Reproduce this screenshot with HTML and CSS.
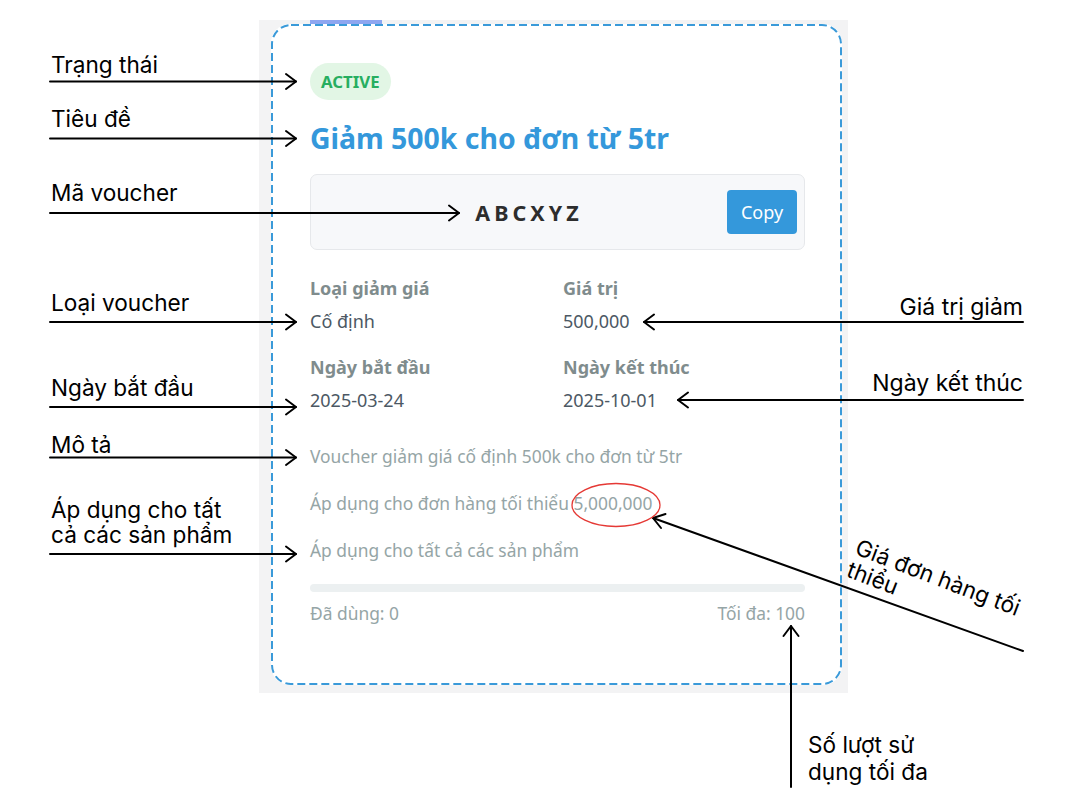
FILE: index.html
```html
<!DOCTYPE html>
<html lang="vi">
<head>
<meta charset="utf-8">
<title>Voucher card – chú thích</title>
<link rel="stylesheet" href="styles.css">
</head>
<body>
<div class="stage">
  <div class="panel">
    <span class="tab-indicator"></span>
    <div class="card">
      <svg class="card-border" width="571" height="661" viewBox="0 0 571 661" aria-hidden="true">
        <rect x="1" y="1" width="569" height="659" rx="19" ry="19"></rect>
      </svg>
      <span class="badge">ACTIVE</span>
      <h2 class="title">Giảm 500k cho đơn từ 5tr</h2>
      <div class="code-box">
        <span class="code">ABCXYZ</span>
        <button class="copy-btn">Copy</button>
      </div>
      <div class="info-grid">
        <div class="field">
          <div class="field-label">Loại giảm giá</div>
          <div class="field-value">Cố định</div>
        </div>
        <div class="field">
          <div class="field-label">Giá trị</div>
          <div class="field-value">500,000</div>
        </div>
        <div class="field">
          <div class="field-label">Ngày bắt đầu</div>
          <div class="field-value">2025-03-24</div>
        </div>
        <div class="field">
          <div class="field-label">Ngày kết thúc</div>
          <div class="field-value">2025-10-01</div>
        </div>
      </div>
      <p class="note">Voucher giảm giá cố định 500k cho đơn từ 5tr</p>
      <p class="note">Áp dụng cho đơn hàng tối thiểu 5,000,000</p>
      <p class="note">Áp dụng cho tất cả các sản phẩm</p>
      <div class="progress"><div class="progress-fill" style="width:0%"></div></div>
      <div class="usage">
        <span>Đã dùng: 0</span>
        <span>Tối đa: 100</span>
      </div>
    </div>
  </div>

  <svg class="arrows" width="1069" height="806" viewBox="0 0 1069 806" aria-hidden="true">
    <g class="arrow-lines">
      <line x1="50" y1="81.5" x2="296" y2="81.5"/>
      <polyline points="286,74 296,81.5 286,89"/>
      <line x1="50" y1="138.5" x2="296" y2="138.5"/>
      <polyline points="286,131 296,138.5 286,146"/>
      <line x1="50" y1="213" x2="459" y2="213"/>
      <polyline points="449,205.5 459,213 449,220.5"/>
      <line x1="50" y1="322" x2="296" y2="322"/>
      <polyline points="286,314.5 296,322 286,329.5"/>
      <line x1="50" y1="407" x2="296" y2="407"/>
      <polyline points="286,399.5 296,407 286,414.5"/>
      <line x1="50" y1="457.5" x2="296" y2="457.5"/>
      <polyline points="286,450 296,457.5 286,465"/>
      <line x1="50" y1="554" x2="296" y2="554"/>
      <polyline points="286,546.5 296,554 286,561.5"/>
      <line x1="1023" y1="322" x2="644" y2="322"/>
      <polyline points="654,314.5 644,322 654,329.5"/>
      <line x1="1023" y1="400" x2="678" y2="400"/>
      <polyline points="688,392.5 678,400 688,407.5"/>
      <line x1="1023" y1="651" x2="653" y2="518"/>
      <polyline points="665.5,514 653,518 661,528"/>
      <line x1="791" y1="787" x2="791" y2="626"/>
      <polyline points="783.5,636 791,626 798.5,636"/>
    </g>
    <ellipse class="highlight" cx="616" cy="505" rx="44" ry="21.5"/>
  </svg>

  <div class="label label-left" style="top:51px">Trạng thái</div>
  <div class="label label-left" style="top:105px">Tiêu đề</div>
  <div class="label label-left" style="top:179px">Mã voucher</div>
  <div class="label label-left" style="top:289px">Loại voucher</div>
  <div class="label label-left" style="top:374px">Ngày bắt đầu</div>
  <div class="label label-left" style="top:431px">Mô tả</div>
  <div class="label label-left label-multi" style="top:497px">Áp dụng cho tất<br>cả các sản phẩm</div>
  <div class="label label-right" style="top:294px">Giá trị giảm</div>
  <div class="label label-right" style="top:370px">Ngày kết thúc</div>
  <div class="label label-rotated">Giá đơn hàng tối<br>thiểu</div>
  <div class="label label-bottom">Số lượt sử<br>dụng tối đa</div>
</div>
</body>
</html>
```

FILE: styles.css
```css
* { box-sizing: border-box; }

html, body {
  margin: 0;
  padding: 0;
  background: #ffffff;
}

.stage {
  position: relative;
  width: 1069px;
  height: 806px;
  overflow: hidden;
  padding-top: 20px;
  padding-left: 259px;
}

/* gray panel around the card */
.panel {
  position: relative;
  width: 589px;
  height: 673px;
  background: #f3f3f4;
  padding: 4px 6px 8px 12px;
}

.tab-indicator {
  position: absolute;
  left: 51px;
  top: 0;
  width: 72px;
  height: 4px;
  background: #8ea6f0;
}

.card {
  position: relative;
  width: 571px;
  height: 661px;
  background: #ffffff;
  border-radius: 19px;
  padding: 39px 37px 0 39px;
  font-family: "Noto Sans", "Open Sans", sans-serif;
  display: flex;
  flex-direction: column;
  align-items: stretch;
}

.card-border {
  position: absolute;
  left: 0;
  top: 0;
  pointer-events: none;
}
.card-border rect {
  fill: none;
  stroke: #3a9ad9;
  stroke-width: 2;
  stroke-dasharray: 8 4;
}

.badge {
  align-self: flex-start;
  height: 37px;
  line-height: 37px;
  padding: 0 11px;
  border-radius: 19px;
  background: #e2f6e5;
  color: #27ae60;
  font-weight: 700;
  font-size: 16.8px;
}

.title {
  margin: 19px 0 0;
  font-size: 28.4px;
  line-height: 38px;
  font-weight: 700;
  color: #3498db;
  letter-spacing: 0;
}

.code-box {
  margin-top: 17px;
  height: 76px;
  display: flex;
  align-items: center;
  padding: 0 7px 0 0;
  background: #f7f8fa;
  border: 1px solid #e6e8eb;
  border-radius: 7px;
}

.code {
  flex: 1;
  text-align: center;
  padding-left: 20px;
  font-size: 21.5px;
  font-weight: 700;
  letter-spacing: 4px;
  color: #2d2d2d;
}

.copy-btn {
  width: 70px;
  height: 44px;
  border: none;
  border-radius: 4px;
  background: #3498db;
  color: #ffffff;
  font-family: "Noto Sans", "Open Sans", sans-serif;
  font-size: 18px;
  padding: 0;
}

.info-grid {
  margin-top: 25px;
  display: grid;
  grid-template-columns: 1fr 1fr;
  column-gap: 11px;
  row-gap: 20px;
}

.field-label {
  font-size: 18px;
  line-height: 26px;
  font-weight: 700;
  color: #7f8c8d;
}

.field-value {
  margin-top: 7px;
  font-size: 18px;
  line-height: 26px;
  color: #4c5864;
}

.note {
  margin: 31px 0 0;
  font-size: 17.4px;
  line-height: 24px;
  color: #95a5a6;
}
.note + .note { margin-top: 23px; }

.progress {
  margin-top: 22px;
  height: 8px;
  border-radius: 4px;
  background: #ecf0f1;
  overflow: hidden;
}
.progress-fill {
  height: 100%;
  background: #3498db;
}

.usage {
  margin-top: 9px;
  display: flex;
  justify-content: space-between;
  font-size: 17.4px;
  line-height: 24px;
  color: #95a5a6;
}

/* annotation layer */
.arrows {
  position: absolute;
  left: 0;
  top: 0;
  pointer-events: none;
}
.arrow-lines line,
.arrow-lines polyline {
  fill: none;
  stroke: #000000;
  stroke-width: 2;
  stroke-linecap: round;
  stroke-linejoin: round;
}
.highlight {
  fill: none;
  stroke: #e53935;
  stroke-width: 1.3;
}

.label {
  position: absolute;
  font-family: Inter, "Noto Sans", sans-serif;
  font-size: 22.6px;
  line-height: 27px;
  color: #000000;
  white-space: nowrap;
}
.label-left { left: 51px; }
.label-multi { line-height: 25px; }
.label-right {
  right: 46px;
  text-align: right;
  font-size: 23px;
}
.label-rotated {
  left: 861px;
  top: 535px;
  line-height: 24px;
  transform: rotate(21deg);
  transform-origin: 0 0;
}
.label-bottom {
  left: 808px;
  top: 731px;
}
```
